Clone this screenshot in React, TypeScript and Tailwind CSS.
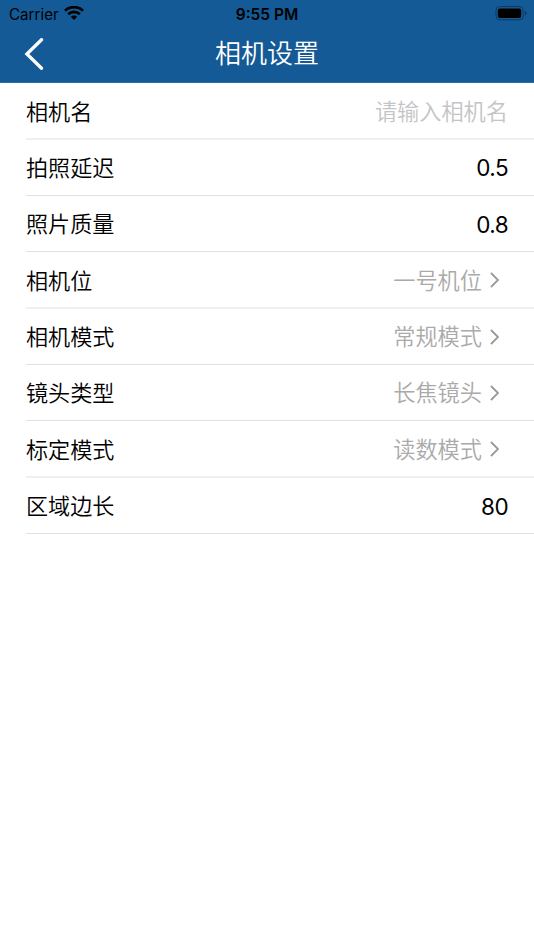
type Row = { label: string; value: string; kind: 'placeholder' | 'text' | 'link' };

const rows: Row[] = [
  { label: '相机名', value: '请输入相机名', kind: 'placeholder' },
  { label: '拍照延迟', value: '0.5', kind: 'text' },
  { label: '照片质量', value: '0.8', kind: 'text' },
  { label: '相机位', value: '一号机位', kind: 'link' },
  { label: '相机模式', value: '常规模式', kind: 'link' },
  { label: '镜头类型', value: '长焦镜头', kind: 'link' },
  { label: '标定模式', value: '读数模式', kind: 'link' },
  { label: '区域边长', value: '80', kind: 'text' },
];

const valueStyle = {
  placeholder: 'text-[22.2px] font-[350] text-[#c4c4c6]',
  text: 'pt-px text-[22.5px] tracking-[-0.6px] text-black',
  link: 'text-[22.2px] font-[350] text-[#aaaaaa]',
};

function StatusBar() {
  return (
    <div className="grid h-[27px] grid-cols-[1fr_auto_1fr] items-center pl-[9px] pr-[7px] text-[15.2px] text-black">
      <div className="flex items-center gap-[5px]">
        <span className="pt-[3px]">Carrier</span>
        <svg width="20" height="15" viewBox="0 0 20 15" fill="none" stroke="currentColor">
          <path d="M1 4.7a13 13 0 0 1 18 0" strokeWidth="2.7" />
          <path d="M4.2 8.2a8.4 8.4 0 0 1 11.6 0" strokeWidth="2.6" />
          <path d="M10 14 6.8 10.8a4.6 4.6 0 0 1 6.4 0Z" fill="currentColor" stroke="none" />
        </svg>
      </div>
      <span className="pr-[2px] pt-[2px] text-center text-[15.5px] font-semibold">9:55 PM</span>
      <svg className="justify-self-end" width="32" height="15" viewBox="0 0 32 15">
        <rect x="1" y=".6" width="27.2" height="13.2" rx="3.7" fill="none" stroke="#0d3a61" />
        <rect x="2.8" y="2.4" width="23.4" height="9.6" rx="2" />
        <path d="M29.8 4.8q1.8.8 1.8 2.4t-1.8 2.4Z" fill="#0d3a61" />
      </svg>
    </div>
  );
}

export default function App() {
  return (
    <div className="h-[950px] w-[534px] overflow-hidden bg-white font-['Inter','Noto_Sans_CJK_SC',sans-serif]">
      <header className="h-[83px] border-b border-[#2c6ca5] bg-[#145a96]">
        <StatusBar />
        <div className="grid h-[53px] grid-cols-[60px_1fr_60px] items-center">
          <svg className="ml-[24px]" width="20" height="32" viewBox="0 0 20 32" fill="none" stroke="white" strokeWidth="3.3">
            <path d="M17.5 1.7 2.9 16 17.5 30.3" strokeLinecap="round" />
          </svg>
          <h1 className="text-center text-[26px] font-[350] leading-none text-white">相机设置</h1>
        </div>
      </header>
      <main className="pl-[26px] pt-[0.2px]">
        {rows.map((row, index) => (
          <div
            key={row.label}
            className={`flex h-[56.35px] items-center justify-between pr-[26px] ${
              index % 3 === 0 ? 'border-b-2 border-[#efefef] pt-[2px]' : 'border-b border-[#e1e1e1] pt-px'
            }`}
          >
            <span className={`text-[22.1px] font-[350] leading-none text-black ${index % 3 === 0 ? 'pt-px' : ''}`}>
              {row.label}
            </span>
            <div className="flex items-center pt-px">
              <span className={`leading-none ${valueStyle[row.kind]}`}>{row.value}</span>
              {row.kind === 'link' && (
                <svg className="mb-px ml-[8px] mr-[8px]" width="10" height="16" viewBox="0 0 10 16" fill="none" stroke="#999" strokeWidth="1.8">
                  <path d="m1 1 7 7-7 7" />
                </svg>
              )}
            </div>
          </div>
        ))}
      </main>
    </div>
  );
}
